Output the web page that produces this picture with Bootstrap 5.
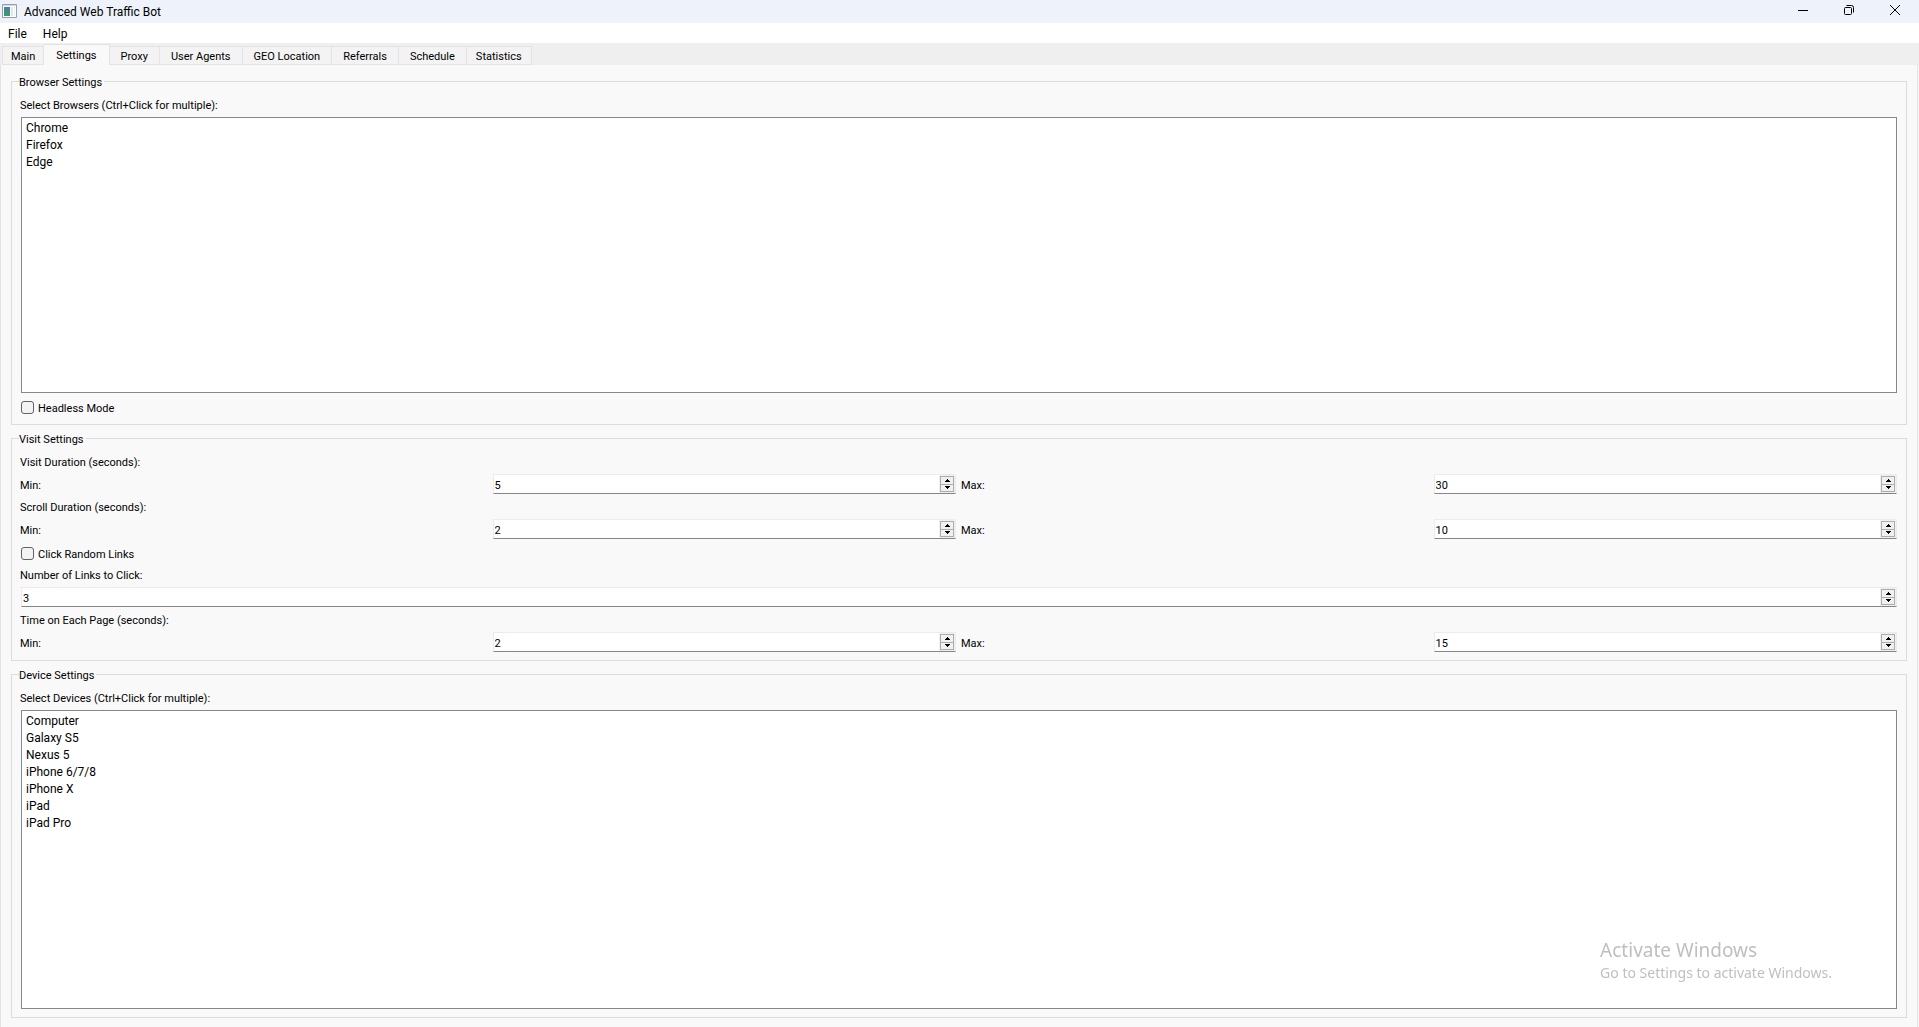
<!DOCTYPE html>
<html lang="en">
<head>
<meta charset="utf-8">
<meta name="viewport" content="width=device-width, initial-scale=1">
<title>Advanced Web Traffic Bot</title>
<link href="https://cdn.jsdelivr.net/npm/bootstrap@5.3.0/dist/css/bootstrap.min.css" rel="stylesheet">
<style>
body{font:11px/15px Roboto,"Liberation Sans",sans-serif;color:#000;background:#f9f9f9}
.app-text{font-size:12px;line-height:17px}
.title-bar{height:23px;background:#eef3fb}
.title-bar span{padding-top:2px}
.title-bar svg{display:block}
.win-btn{width:46px;height:23px;padding:0 2px 3px 0;border:0;background:none;display:flex;align-items:center;justify-content:center}
.title-icon{margin:0 7px 2px 2px}
.menu-bar{height:20px;background:#fff;padding:2px 0 0 8px;gap:16px}
.menu-bar a{color:#000;text-decoration:none}
.tab-strip{height:22px;background:#efefef;padding-left:2px;border:0;align-items:flex-end;flex-wrap:nowrap;position:relative;z-index:1;margin-bottom:-1px}
.tab-strip .nav-link{height:19px;margin:0;padding:0 11px;border:1px solid #e3e3e3;border-left-width:0;border-radius:0;background:#f3f3f3;color:#000;line-height:19px}
.tab-strip .nav-item:first-child .nav-link{border-left-width:1px;padding:0 8px}
.tab-strip .nav-item:last-child .nav-link{padding:0 9px}
.tab-strip .nav-link.active{height:21px;padding:0 12px;background:#f9f9f9;color:#000;border-color:#e3e3e3;border-bottom:0}
.pane{border:1px solid #e3e3e3;border-bottom:0;margin-right:1px;padding:9px 10px;gap:6px;min-height:0}
.group{border:1px solid #dcdcdc;padding:8px 9px}
.group.grows{flex:1 1 0;min-height:0}
.group legend{float:none;width:auto;font-size:11px;line-height:13px;margin:0 0 0 -2px;padding:2px 2px 0 0}
.stack{display:flex;flex-direction:column;gap:5px;height:100%}
.stack label,.caption-line{line-height:13px;padding-top:2px;margin-left:-1px}
.pick-list{flex:1 1 0;min-height:60px;width:100%;border:1px solid #828790;border-radius:0;background:#fff;padding:3px 0 2px;color:#000;outline:0;overflow:auto}
.pick-list option{padding:0 4px;min-height:17px;line-height:17px}
.tick{height:18px;display:flex;align-items:center;gap:5px}
.tick .form-check-input{width:13px;height:13px;margin:0;border:1px solid #626262;border-radius:3px;background-color:#f3f3f3}
.range-row{display:flex;gap:6px;align-items:center}
.range-row label{flex:1 1 5px;min-width:0}
.spin{flex:1 1 0;min-width:0;height:20px;display:flex;background:#fff;border:1px solid #ececec;border-bottom-color:#868686}
.spin input{flex:1 1 0;min-width:0;border:0;padding:2px 1px 0;background:none;outline:0;font-size:11px;line-height:15px;appearance:textfield;-moz-appearance:textfield}
.spin input::-webkit-inner-spin-button{appearance:none;margin:0}
.steps{width:16px;padding:1px;background:#efefef;display:flex;flex-direction:column}
.steps button{flex:1 1 0;padding:0;border:1px solid #adadad;background:#f0f0f0;display:flex;align-items:center;justify-content:center}
.steps button+button{border-top:0}
.stack>.spin{flex:none}
.watermark{position:fixed;right:87px;bottom:44px;color:#bfbfbf;pointer-events:none;font-family:"Noto Sans","Open Sans",sans-serif;font-size:14px;line-height:20px}
.watermark strong{display:block;font-weight:400;font-size:19px;line-height:26px}
</style>
<script src="https://cdn.jsdelivr.net/npm/bootstrap@5.3.0/dist/js/bootstrap.bundle.min.js"></script>
</head>
<body class="d-flex flex-column vh-100 overflow-hidden">
<svg class="d-none" aria-hidden="true">
  <symbol id="up" viewBox="0 0 5 3"><path d="M2 0h1v1h1v1h1v1H0V2h1V1h1z"/></symbol>
  <symbol id="down" viewBox="0 0 5 3"><path d="M0 0h5v1H4v1H3v1H2V2H1V1H0z"/></symbol>
</svg>
<header class="title-bar d-flex align-items-center app-text flex-shrink-0">
  <svg class="title-icon" width="15" height="14" viewBox="0 0 15 14" aria-hidden="true">
    <defs><linearGradient id="g" x1="0" y1="0" x2="0" y2="1"><stop offset="0" stop-color="#4a7bb0"/><stop offset="1" stop-color="#3f9a6b"/></linearGradient></defs>
    <path fill="#fff" stroke="#9a9fa5" d="M.5.5h14v13H.5z"/><path fill="#d5d9dd" d="M1 1h13v1H1z"/>
    <path fill="url(#g)" d="M2 3h6v9H2z"/><path fill="#dbe9e6" d="M9 3h2v9H9z"/><path fill="#eef1f4" d="M12 3h1v9h-1z"/>
  </svg>
  <span class="flex-grow-1">Advanced Web Traffic Bot</span>
  <button class="win-btn" aria-label="Minimize"><svg width="10" height="10"><path d="M0 5.5h10" stroke="#000"/></svg></button>
  <button class="win-btn" aria-label="Restore"><svg width="10" height="10" fill="none" stroke="#000"><rect x=".5" y="2.500" width="7" height="7" rx="1"/><path d="M2.500.5h5a2 2 0 0 1 2 2v5"/></svg></button>
  <button class="win-btn" aria-label="Close"><svg width="10" height="10"><path d="M0 0l10 10M10 0L0 10" stroke="#000"/></svg></button>
</header>
<nav class="menu-bar d-flex align-items-center app-text flex-shrink-0"><a href="#">File</a><a href="#">Help</a></nav>
<ul class="nav nav-tabs tab-strip flex-shrink-0" role="tablist">
  <li class="nav-item"><button class="nav-link" role="tab">Main</button></li>
  <li class="nav-item"><button class="nav-link active" role="tab" aria-selected="true">Settings</button></li>
  <li class="nav-item"><button class="nav-link" role="tab">Proxy</button></li>
  <li class="nav-item"><button class="nav-link" role="tab">User Agents</button></li>
  <li class="nav-item"><button class="nav-link" role="tab">GEO Location</button></li>
  <li class="nav-item"><button class="nav-link" role="tab">Referrals</button></li>
  <li class="nav-item"><button class="nav-link" role="tab">Schedule</button></li>
  <li class="nav-item"><button class="nav-link" role="tab">Statistics</button></li>
</ul>
<main class="pane d-flex flex-column flex-fill">
  <fieldset class="group grows">
    <legend>Browser Settings</legend>
    <div class="stack">
      <label for="browsers">Select Browsers (Ctrl+Click for multiple):</label>
      <select class="pick-list app-text" id="browsers" multiple><option>Chrome</option><option>Firefox</option><option>Edge</option></select>
      <div class="tick"><input class="form-check-input" type="checkbox" id="headless"><label for="headless">Headless Mode</label></div>
    </div>
  </fieldset>
  <fieldset class="group">
    <legend>Visit Settings</legend>
    <div class="stack">
      <div class="caption-line">Visit Duration (seconds):</div>
      <div class="range-row">
        <label for="vmin">Min:</label>
        <div class="spin"><input type="number" id="vmin" value="5"><div class="steps"><button aria-label="Increase"><svg width="5" height="3"><use href="#up"/></svg></button><button aria-label="Decrease"><svg width="5" height="3"><use href="#down"/></svg></button></div></div>
        <label for="vmax">Max:</label>
        <div class="spin"><input type="number" id="vmax" value="30"><div class="steps"><button aria-label="Increase"><svg width="5" height="3"><use href="#up"/></svg></button><button aria-label="Decrease"><svg width="5" height="3"><use href="#down"/></svg></button></div></div>
      </div>
      <div class="caption-line">Scroll Duration (seconds):</div>
      <div class="range-row">
        <label for="smin">Min:</label>
        <div class="spin"><input type="number" id="smin" value="2"><div class="steps"><button aria-label="Increase"><svg width="5" height="3"><use href="#up"/></svg></button><button aria-label="Decrease"><svg width="5" height="3"><use href="#down"/></svg></button></div></div>
        <label for="smax">Max:</label>
        <div class="spin"><input type="number" id="smax" value="10"><div class="steps"><button aria-label="Increase"><svg width="5" height="3"><use href="#up"/></svg></button><button aria-label="Decrease"><svg width="5" height="3"><use href="#down"/></svg></button></div></div>
      </div>
      <div class="tick"><input class="form-check-input" type="checkbox" id="random"><label for="random">Click Random Links</label></div>
      <label for="links">Number of Links to Click:</label>
      <div class="spin"><input type="number" id="links" value="3"><div class="steps"><button aria-label="Increase"><svg width="5" height="3"><use href="#up"/></svg></button><button aria-label="Decrease"><svg width="5" height="3"><use href="#down"/></svg></button></div></div>
      <div class="caption-line">Time on Each Page (seconds):</div>
      <div class="range-row">
        <label for="tmin">Min:</label>
        <div class="spin"><input type="number" id="tmin" value="2"><div class="steps"><button aria-label="Increase"><svg width="5" height="3"><use href="#up"/></svg></button><button aria-label="Decrease"><svg width="5" height="3"><use href="#down"/></svg></button></div></div>
        <label for="tmax">Max:</label>
        <div class="spin"><input type="number" id="tmax" value="15"><div class="steps"><button aria-label="Increase"><svg width="5" height="3"><use href="#up"/></svg></button><button aria-label="Decrease"><svg width="5" height="3"><use href="#down"/></svg></button></div></div>
      </div>
    </div>
  </fieldset>
  <fieldset class="group grows">
    <legend>Device Settings</legend>
    <div class="stack">
      <label for="devices">Select Devices (Ctrl+Click for multiple):</label>
      <select class="pick-list app-text" id="devices" multiple><option>Computer</option><option>Galaxy S5</option><option>Nexus 5</option><option>iPhone 6/7/8</option><option>iPhone X</option><option>iPad</option><option>iPad Pro</option></select>
    </div>
  </fieldset>
</main>
<div class="watermark"><strong>Activate Windows</strong>Go to Settings to activate Windows.</div>
</body>
</html>
